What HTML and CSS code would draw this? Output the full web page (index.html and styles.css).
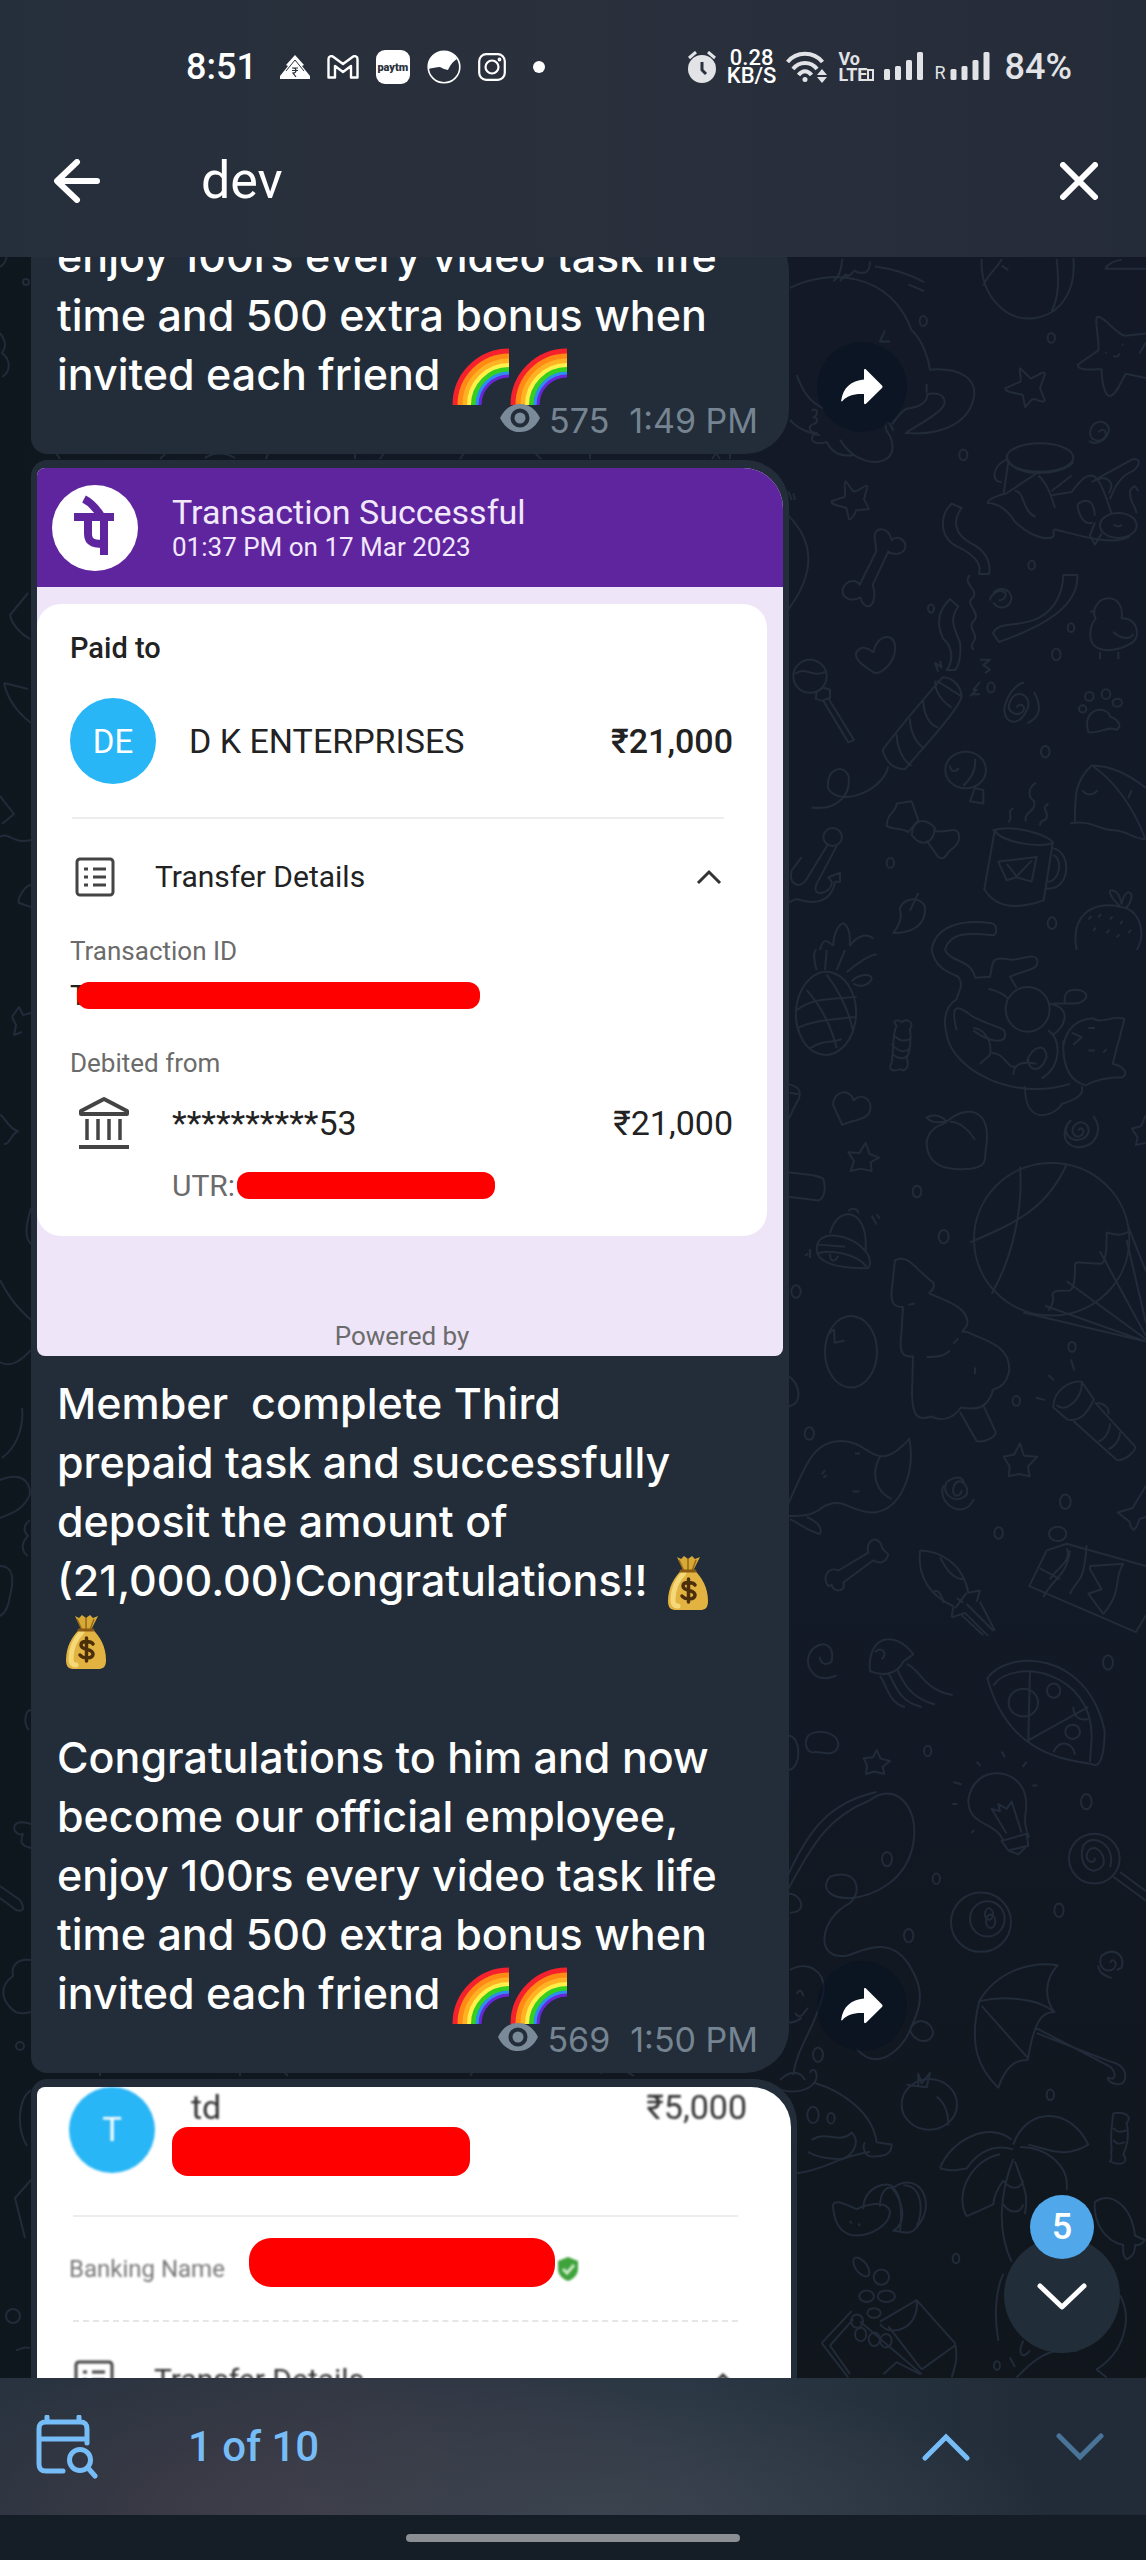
FILE: index.html
```html
<!DOCTYPE html>
<html lang="en">
<head>
<meta charset="utf-8">
<meta name="viewport" content="width=device-width, initial-scale=1">
<title>Chat search</title>
<link rel="stylesheet" href="styles.css">
</head>
<body>
<svg class="defs" aria-hidden="true">
  <symbol id="rainbow" viewBox="0 0 58 58">
    <g fill="none" stroke-width="6">
      <path d="M3.500 57A53.500 53.500 0 0 1 57 3.500" stroke="#f5222d"/>
      <path d="M8.500 57A48.500 48.500 0 0 1 57 8.500" stroke="#ff8a14"/>
      <path d="M13.500 57A43.500 43.500 0 0 1 57 13.500" stroke="#ffb324"/>
      <path d="M17.500 57A39.500 39.500 0 0 1 57 17.500" stroke="#fff04a" stroke-width="5"/>
      <path d="M21.500 57A35.500 35.500 0 0 1 57 21.500" stroke="#35cf1f" stroke-width="5"/>
      <path d="M25.500 57A31.500 31.500 0 0 1 57 25.500" stroke="#2b8ff2" stroke-width="4"/>
      <path d="M28 57A29 29 0 0 1 57 28" stroke="#6a26d9" stroke-width="3"/>
    </g>
  </symbol>
  <symbol id="moneybag" viewBox="0 0 58 58">
    <path d="M18 3l4 2 3-3 4 3 4-3 3 3 5-2-7 14h-9z" fill="#d9a935"/>
    <path d="M20 6l5 11M29 5v12M37 6l-4 11" stroke="#94691a" stroke-width="1.500" fill="none"/>
    <path d="M23 16h12c8 7 14 18 14 31 0 7-3 9-8 9H17c-5 0-8-2-8-9 0-13 6-24 14-31z" fill="#e3b341"/>
    <path d="M25 19c-7 7-11 16-11 27 0 4 2 6 5 6" stroke="#f5d878" stroke-width="5" fill="none" stroke-linecap="round"/>
    <path d="M22 17h14" stroke="#8a5a14" stroke-width="3" stroke-linecap="round"/>
    <path d="M36 31c-2-3-12-4-12 1 0 6 12 3 12 9 0 5-10 5-13 1M29.500 25v23" stroke="#4a2f0a" stroke-width="3.500" fill="none" stroke-linecap="round"/>
  </symbol>
  <symbol id="eye" viewBox="0 0 40 28">
    <path fill-rule="evenodd" d="M0 14C5 4 12 0 20 0s15 4 20 14c-5 10-12 14-20 14S5 24 0 14zM20 4.500a9.500 9.500 0 1 0 0 19 9.500 9.500 0 1 0 0-19z" fill="#7b8a98"/>
    <circle cx="20" cy="14" r="5.500" fill="#7b8a98"/>
  </symbol>
  <symbol id="share" viewBox="0 0 42 36">
    <path d="M23 1.500c0-1.400 1-1.800 2-.9l16 15.900c.8.900.8 1.700 0 2.500l-16 15.700c-1 .9-2 .5-2-.9V25C13 24.500 6 26.500 1.500 32c-.7.800-1.500.5-1.300-.6C2 19 10 11.500 23 10.500z" fill="#fff"/>
  </symbol>
  <symbol id="list" viewBox="0 0 40 40">
    <g fill="none" stroke="#444" stroke-width="3">
      <rect x="2" y="2" width="36" height="36" rx="3"/>
      <path d="M18 12h13M18 20h13M18 28h13M9 12h4M9 20h4M9 28h4"/>
    </g>
  </symbol>
</svg>

<header class="top">
  <div class="status">
    <div class="status-left">
      <span class="clock">8:51</span>
      <svg width="30" height="24" viewBox="0 0 30 24"><path d="M15 0l9 10-2 1 8 10v3H0v-3l8-10-2-1z" fill="#fff"/><path d="M6 16L15 5l9 11" fill="none" stroke="#29313c" stroke-width="1"/><path d="M12 13h6M12 15.500h6M13 13c4 0 4 5 0 5l3 4" fill="none" stroke="#29313c" stroke-width="1.200"/></svg>
      <svg width="32" height="24" viewBox="0 0 32 24"><path d="M1.500 4c0-3 3-3.500 5-2L16 9l9.500-7c2-1.500 5-1 5 2v18.500H24V11l-8 6-8-6v11.500H1.500z" fill="none" stroke="#fff" stroke-width="2.400" stroke-linejoin="round"/></svg>
      <span class="paytm">paytm</span>
      <svg width="34" height="34" viewBox="0 0 34 34"><circle cx="17" cy="17" r="15.800" fill="none" stroke="#fff" stroke-width="1.600"/><path d="M1 19C0 8 8 1 17 1c6 0 11 3 13 8-5 3-7 7-9 11l-4-1-4-2c-4 0-7 1-12 2z" fill="#fff"/></svg>
      <svg width="28" height="28" viewBox="0 0 28 28" fill="none" stroke="#fff" stroke-width="2.200"><rect x="1.200" y="1.200" width="25.600" height="25.600" rx="7"/><circle cx="14" cy="14" r="6.500"/><circle cx="21.500" cy="6.500" r=".8"/></svg>
      <span class="dot"></span>
    </div>
    <div class="status-right">
      <svg width="30" height="32" viewBox="0 0 30 32"><circle cx="15" cy="18" r="14" fill="#e1e3e6"/><path d="M15 11v8l4 4" fill="none" stroke="#29313c" stroke-width="3"/><path d="M2 7l7-6M28 7l-7-6" stroke="#e1e3e6" stroke-width="3"/></svg>
      <span class="rate"><span>0.28</span><span>KB/S</span></span>
      <svg width="42" height="32" viewBox="0 0 42 32" fill="none" stroke="#e1e3e6" stroke-width="4"><path d="M1.500 11c9-11 26-11 35 0M7 18c6-8 18-8 24 0M12.500 24c4-5 9-5 13 0"/><circle cx="19" cy="28.500" r="2.500" fill="#e1e3e6" stroke="none"/><path d="M31 24l5-6 5 6zM31 26h10l-5 6z" fill="#e1e3e6" stroke="none"/></svg>
      <span class="volte"><span>Vo</span><span>LTE<i></i></span></span>
      <svg width="40" height="30" viewBox="0 0 40 30" fill="#e1e3e6"><rect y="17" width="6" height="11" rx="1.500"/><rect x="11" y="14" width="6" height="14" rx="1.500"/><rect x="22" y="8" width="6" height="20" rx="1.500"/><rect x="33" width="6" height="28" rx="1.500"/></svg>
      <span class="roam"><span>R</span><svg width="41" height="30" viewBox="0 0 40 30" fill="#e1e3e6"><rect y="17" width="6" height="11" rx="1.500"/><rect x="11" y="14" width="6" height="14" rx="1.500"/><rect x="22" y="8" width="6" height="20" rx="1.500"/><rect x="33" width="6" height="28" rx="1.500"/></svg></span>
      <span class="battery">84%</span>
    </div>
  </div>
  <form class="search" role="search">
    <button type="button" class="icon-btn" aria-label="Back"><svg width="46" height="44" viewBox="0 0 46 44" fill="none" stroke="#fff" stroke-width="6" stroke-linecap="round" stroke-linejoin="round"><path d="M23 3L3 22l20 19M4 22h39"/></svg></button>
    <input class="query" type="text" value="dev" aria-label="Search messages">
    <button type="button" class="icon-btn" aria-label="Clear"><svg width="38" height="38" viewBox="0 0 38 38" stroke="#fff" stroke-width="6" stroke-linecap="round"><path d="M3 3l32 32M35 3L3 35"/></svg></button>
  </form>
</header>

<main class="chat">
  <svg class="wallpaper" viewBox="0 257 1146 2121" preserveAspectRatio="xMinYMin slice" aria-hidden="true">
    <!-- upper right -->
    <g transform="translate(780 250) scale(.3333 .4464)">
      <path d="M30 85C150 40 330 50 395 180c30 20 50 60 55 88 90-5 140 20 132 60-10 50-80 90-205 82 40-20 120-50 117-70-3-20-30-20-52-17 2 20-30 30-60 32-20 5-40 30-45 35M440 300v20M50 280c20 40 40 60 80 75M30 380c20 20 60 30 90 35M315 180l-15 25h30M180 425c40 50 110 60 145 40 20-15 15-40-5-60-10-20 5-30 20 0M95 360c20-10 20 10 5 15 10-2 20 10 0 15-20 5-10 20 10 20-30 10-10 30 30 20 20 30 50 32 80 30M160 70c20-10 25-30 27-50M180 70c10-10 20-20 20-12 20 0 20-20 30-8 10 0 40 10 40-25M285 37c50 5 100 15 147 35M385 77l47 15"/>
      <path d="M605 20c-5 80 70 140 155 133 80-7 130-60 120-135M815 137c25-35 20-80 15-117M610 80c20-35 45-40 55-60M665 35l20 10M975 42h123M975 42c10-10 30-18 50-20"/>
      <path d="M950 150c20-5 60 40 85 42l63-5M1078 232l20-25M950 150c-5 20 10 60 5 75l-62 32c0 15 50 10 72 10 0 30 10 60 25 60 20-2 30-30 48-50l60 10M975 230h5M1025 212h5M1000 237c10 5 15 0 20-5"/>
      <path d="M720 265l32 23c20-5 40-20 43-10l-15 32 15 27c-10 10-30-10-42 0l-17 15-8-27c-15-5-52-5-52-15l45-15c5-10-5-25-1-30zM197 518l23 23c20 0 40-20 42-10l-10 27 15 22-38 3c-5 10-15 22-22 20l-8-25c-15-5-45-5-45-15l40-10c5-10-5-30 3-35z"/>
      <path d="M955 408c20-15 30 5 15 15-20 10-40 0-40-15 5-30 55-30 57-5-5 25-40 35-60 25"/>
      <ellipse cx="780" cy="465" rx="100" ry="32"/><path d="M680 460c5 50 160 50 200 15M686 470l-15 75M680 470c-40 10-50 50-15 50M780 495L680 545c-30 5-60 15-57 22 30 0 60 15 80 40 40 30 90 45 115 36 10-8-5-15 7-17 60 10 170 40 225 15M705 540c30 0 20 45 62 58M775 505c30 20 40 50 50 73M810 550l65-8c60-60 80-50 120 50M815 540l60-35M945 515l115-47c30 0 15 22-10 30-30 10-50 40-60 60M935 520c50-20 70 0 52 25"/>
      <ellipse cx="1015" cy="617" rx="55" ry="28"/><path d="M945 595c-5-50-45-30-52-25 0 20 20 50 45 40M1070 590c-10-30-20-20-20-50 15-20 20-5 25 0M945 610l-15 30 15 20 20-25M1000 615c10 5 20 5 25 0"/>
      <path d="M285 650c-10-30 40-35 50 0 20-15 55 5 35 25-15 10-40 5-45 0l-47 75c10 20 5 50-17 48-20-5-15-15-20-20-20 10-60 5-52-20 10-20 40-20 50-8l50-75zM515 568l30 10c-30 30-20 60 30 80 40 15 60 40 52 68h-30c10-25-20-45-60-60-60-20-60-70-22-98zM570 728c-25 20 25 30 10 50-30 15 20 30 5 50-30 20 15 30-5 50-10 10 0 15 0 18M510 782l25 17c-30 30-10 50 5 80 5 30-5 55-15 62h-25c20-20 20-50-10-70-20-30-20-60 20-89zM850 728h42c5 70-100 115-235 150l-18-20c20-30 80-10 140-35 50-20 70-60 71-95z"/>
      <path d="M655 785c20 0 30-15 15-20-20-5-40 10-40 20M640 790c20 20 50 10 55-10-5-25-40-25-55-12M985 780c30 0 45 20 40 45 30 0 50 15 45 40-10 30-130 50-138 5-5-25 10-40 15-45-15-20 10-45 38-45zM940 810h-10M960 900v17M1015 900v17M1000 855c20 15 50 20 60 5"/>
      <path d="M285 948c-20-10-60-25-57-45 15-20 40-10 52-2 10-40 60-45 65-15 5 30-30 60-60 62z"/><ellipse cx="90" cy="955" rx="50" ry="37"/><path d="M45 950c30-20 50 10 90-5M110 990l20-10 20 5v18l-25 7-18-5zM130 1010l75 93 17-5-78-95"/>
      <path d="M470 965l75 35c-10 30-110 110-170 163-30 0-55-10-67-43 40-40 130-120 180-163 30 0 55 20 57 43M465 965c0 30 30 50 50 60M430 1010c0 30 20 55 45 60M390 1050c0 30 20 55 40 65M350 1085c0 30 20 60 45 70M325 1157c-20 60-150 90-180 50-10-40 40-60 60-30 10 40-30 80-110 72M480 920l5 15-20-10 10 20M600 918h30l-20 12 20 10-15 8M570 1000l20-15h-10l20-17M580 995h20"/>
      <path d="M710 1025c10-15 35 0 15 12-20 8-45-5-37-20 15-40 70-20 55 10-20 40-70 40-70 0 10-40 50-60 60-57M762 990c30 40 10 60-20 70M925 1080c-15-40 20-50 35-50 20 0 30 10 30 15 20 5 40 20 20 30-30-10-50 10-85 5z"/>
      <ellipse cx="928" cy="1000" rx="13" ry="10"/><ellipse cx="978" cy="995" rx="13" ry="11"/><ellipse cx="1012" cy="1014" rx="14" ry="9"/><ellipse cx="908" cy="1028" rx="11" ry="8"/>
      <ellipse cx="557" cy="1165" rx="61" ry="41"/><path d="M585 1140c5 30-20 50-35 60M570 1235l15-30 25 5v30zM510 1155c0 15 20 15 25 5M320 1290c0-30 30-30 30-50l45-5 20 42-30 27c-20-10-50-5-65-14zM395 1310c5-35 40-40 70-15-5 35-40 45-70 15zM460 1300c30 10 60-10 75 5 10 20-10 30-15 35-20 5-20 30-45 20l-35-37"/>
      <path d="M645 1297l-32 135c40 50 120 40 178 25l28-132M640 1300c60-15 160 10 180 27-30 15-160 0-175-27zM820 1340c60 10 50 100-25 90M820 1355c30 10 20 60-18 60M655 1370l115-10-15 55-45-10-30 7zM680 1375l30 28 45-35M685 1283c20-20-10-20 15-33M738 1280c-10-20 30-20 25-45-20-10-20-30 5-42M780 1290c0-20 25-5 20-28-10-15-5-15 5-22"/>
      <ellipse cx="158" cy="1315" rx="28" ry="20"/><path d="M145 1330l-70 85c-20 15-50 5-40-25l30-30M170 1335l-60 85c-20 35 50 20 45-5l-10-10 35-10v20h-15c-10 50-70 50-110 40-20-5-25 20-45-10M340 1530c30 0 100-5 95-60-25-30-80-10-75 10 10 20-10 40-20 50zM390 1480l25-40M885 1280c0-60 0-90 50-125 60 0 110 20 163 50M870 1285c60-10 90 15 130 15 40 0 60 20 98 20M940 1157c60 30 120 90 155 160M908 1210c10 15 35 10 45 0M1055 1210l-10 18M890 1568c-20-80 50-110 130-97 60 5 80 60 50 97M1020 1470c-30-20-40-40-20-35 20 5 20 20 25 30 5-20 20-35 30-20 0 15-10 25-20 30M120 1568c10-30 20-20 40-10 0-30 20-50 30-50 20 10 20 30 20 50 20-20 50-30 70-15M455 1568c10-50 80-70 180-60 20 5 15 25 5 27-60-5-130-10-145 33"/>
      <g><circle cx="430" cy="159" r="11"/><circle cx="814" cy="197" r="11"/><circle cx="550" cy="459" r="12"/><circle cx="755" cy="706" r="10"/><circle cx="453" cy="803" r="9"/><circle cx="873" cy="846" r="10"/><circle cx="829" cy="906" r="13"/><circle cx="633" cy="980" r="11"/><circle cx="796" cy="1124" r="13"/><circle cx="331" cy="1373" r="11"/><circle cx="816" cy="1508" r="13"/></g>
      <path d="M25 595c80 60 80 130 0 210M25 540l10 20M40 545l5 15M925 1500l10-8M955 1495l8-7M990 1500l8-7M1020 1510l8-7M940 1525l8-7M980 1530l8-7M1010 1540l8-7M1045 1530l8-7"/>
    </g>
    <!-- middle right -->
    <g transform="translate(780 950) scale(.3333 .4464)">
      <ellipse cx="138" cy="142" rx="90" ry="93" transform="rotate(15 138 142)"/><path d="M80 90c60 50 80 100 90 130M140 55c50 50 70 90 80 130M50 135c50-30 120-25 180-30M50 175c60-20 120-20 175-25M90 220c40-20 60-10 95-20M110 45c-10-25-10-45 0-45M135 45l5-45M170 45l25-45M200 50c30-20 70-40 90-40M215 70c20-15 60-20 60-5-10 15-35 20-55 10"/>
      <path d="M350 170c-20-15 10-15 15-8 15-10 40 0 25 15 5 20 0 50-10 65 10 20-5 32-20 25-15 5-40 5-25-15 10-50 0-60 15-82zM340 190c20 15 30 15 50 10M335 210c20 20 40 20 55 10M340 235c20 10 30 10 45 0M187 392l-28-45c0-30 50-40 62-10 25-20 60 0 48 25-10 20-60 20-82 30z"/>
      <path d="M257 432l12 25 28 8-25 10 3 20-33-5-30 5 10-22-17-20 33 2zM25 498c50 5 90 5 105 15 10 25 0 45-15 48l-90-8M25 300c20 5 40 10 33 30l-33 50M30 320l25 3"/>
      <path d="M455 0c10 40 50 50 80 60 20 20-5 40-5 50-40 20-40 50-30 80 20 80 200 150 370 110M495 0c20 30 80 20 90 62l45-2c10-30 0-45 50-40 30 10 90-20 92 5 5 20-40 20-82 35l20 25M625 87c30 5 50 15 60 22M530 180c-20-60 0-60 50-30 80 30 100 20 95 45-15 20-70 0-95-15M600 255l30-20c10-40-30-60-50-60M635 230c40 0 50 40 70 30M700 280c0-30 40-30 70-25M740 250c20-40 60-40 60-10-20 40-60 30-55 0M735 305c0 100 100 60 110 40 40-10 70-20 60-40M807 120c80 10 40 60 10 70M820 120h60c30 0 60-20 20-30-40-5-50 10-45 30"/>
      <ellipse cx="743" cy="133" rx="66" ry="50"/><path d="M850 215c10-40 40-60 90-62 20 15 70-10 93 2l-15 45c-10 20-10 30-20 55 30 5 50 20 30 30-40 0-80 5-110 18-60-10-70-60-68-100M875 185l30 10-25 18M925 175h20M925 225h20M970 230l10-8M805 180c40 20 40 80-20 108"/>
      <path d="M500 385c60-40 130-30 120 50-10 30 10 50-50 55-80 5-130-10-130-60 10-40 60-40 60-45zM500 385c-20-20-50-15-60-10 15 15 40 10 60 10zM510 385c30 0 60 20 75 40M895 405c10-15 25 5 5 12-20 5-30-15-15-25 30-20 60 15 25 30-40 15-70-20-40-37M940 372c30 30 10 70-50 70-60-10-30-60-15-60M1098 370l-15 25-27 5 17 20-5 17 30-5"/>
      <ellipse cx="815" cy="648" rx="233" ry="171"/><path d="M720 485c10 90-20 200-85 285M860 480c-60 100-150 130-290 175M1045 620l53 100M1040 650l58 185M960 675l138 190M860 742l238 130M795 797l303 80M730 812l368 65M1050 630c-10 0-20 15-70 3 0 30 0 60-15 70-60 0-80-10-80 5 0 20 0 50-15 55-40 0-60 0-50 15 0 10-5 20-15 30"/>
      <path d="M150 635c20-60 100-60 107 15v25M110 670c0-50 110-30 140 0 30 20 20 45 10 43-60 0-150-5-150-43zM110 680c40-10 120 0 150 30M115 660l80 5M150 680c0 20 15 20 25 5M205 585c10-10 30-5 30 5M275 595l15 20M290 592l10 10M75 685l10-5M90 690v-20"/>
      <ellipse cx="213" cy="900" rx="78" ry="80"/><path d="M145 860l17-10 2 30 30-5M345 695c40-15 60 20 115 50 10 20-20 20-10 25 60 20 110 30 113 65-5 20-30 20-5 20 60 20 130 30 130 85-10 50-60 40-50 50-20 40-50 40-95 35-30 30-60 30-90 20-40 10-55 0-57-50l3-85c-40 5-40-20-35-50l5-60c-30 0-40-10-32-50zM385 795l20-3M440 912c20 0 50 0 70-15M520 882l15-12M540 1035l50 65c20 5 60-10 57-20l-37-60M585 935v15"/>
      <path d="M25 1240c50-80 70-140 160-140 90 0 100 80 203-5 20 80-30 160-105 165-80 0-90-40-160-10M25 1268c40 0 70 0 100-18M300 1135c-30 40-10 80 35 95M30 1275c30 10 60 30 90 33 10-20-20-30-40-38M125 1175l10-10M130 1182l10-5M225 1128h15M218 1213h20M25 955c30 10 50 60 0 68"/>
      <path d="M820 1025c0-40 50-60 85-58l37 40c-20 30-40 50-80 45zM830 1020c30 20 80-20 75-50M880 1055l130 87c20 5 60-20 55-30l-120-98M950 1015c20 0 40 10 35 25M990 1060c0 20-20 40-35 40M1020 1080c0 20-20 35-35 38M873 917l10 25M805 952l17 12M768 1003l27 5"/>
      <path d="M720 1105l12 28 40 2-28 22 5 22-32-5-30 5 2-22-18-22 32-5zM545 1210c0 15-30 20-25-5 10-30 50-10 40 15-30 25-80 0-60-28 40-20 50-5 52 0M490 1200c-20 40 60 80 92 30M145 1425c-20-20 0-45 30-35l90-40c-10-30 30-40 40-15 0 10 20 15 20 20-10 20-30 20-45 12l-90 50c10 20-30 25-35 5z"/>
      <path d="M420 1345c60 0 130 30 145 95l35-5-10 25M515 1495l5-25c-60-20-110-60-100-125M480 1360c20 30 40 50 75 50M515 1495l40-10 70 52M560 1465l80 60M545 1490l65 45M600 1460l45 65M460 1438c20-10 30 20 30 25M560 1440l-35 35M530 1452l20 10"/>
      <path d="M800 1345l-52 80 320 103 30-38M800 1345l60-15 238 50M870 1345c-10 60-50 60-80 105M920 1333c-10 100-30 70-50 110M840 1410c-20-10-50-20-60-25M860 1340c20 30-40 50-50 70M930 1380l100-5c-30 30 0 60-60 112l-45-45 40-10-35-45zM1098 1200l-40 50-45 10 35 20c10 30 20 20 30-5l20-5"/><ellipse cx="833" cy="1308" rx="26" ry="16"/>
      <circle cx="411" cy="541" r="13"/><circle cx="491" cy="642" r="15"/><circle cx="48" cy="765" r="14"/><circle cx="876" cy="889" r="11"/><circle cx="709" cy="1010" r="11"/><circle cx="88" cy="1083" r="14"/><circle cx="856" cy="1236" r="16"/><circle cx="656" cy="1306" r="13"/>
    </g>
    <!-- lower right -->
    <g transform="translate(780 1640) scale(.3333 .4783)">
      <path d="M120 35c0 15 20 20 35 10 10-40-30-40-50-30-40 20-20 65 30 65 20 0 25-5 35-5M270 65c-10-70 70-90 130-35l-30 15c-20 30-70 30-100 20zM300 75c20 20 30 60 75 65M325 70c20 20 30 60 100 70M350 60c20 30 40 60 115 75M380 50c40 10 50 55 138 65M285 25c20-15 40 5 20 15"/>
      <path d="M622 80c60-60 300-60 352 110 0 40-10 80-35 70-60-10-250-10-317-180zM640 95c60-60 300-30 295 110l-5 50M750 65l-5 145 180-70M880 140c0 20 20 30 45 25M820 235c20-30 60-20 65 5"/><ellipse cx="730" cy="131" rx="44" ry="29"/><ellipse cx="821" cy="106" rx="20" ry="15"/><ellipse cx="878" cy="192" rx="22" ry="15"/>
      <path d="M85 200c20-15 90-10 90 20-10 30-60 10-75 15-20 0-30-20-15-35zM290 230l12 18 28 5-22 12 5 15-30-5-25 5 3-18-10-15 28-2zM25 200c40 0 40 70 0 72"/>
      <path d="M670 420c-20-40-105-30-105-85 15-80 165-70 173 0 5 30-15 40 10 78M665 420l75-15 5 25-60 10zM685 440l30 8 30-20M680 405l-45-52 25 5-5-15 25 10 15-15 30 65M520 297l25 5M517 343h15M590 255l12 8M665 233l10 12M740 255l-12 10M757 304h15M573 403l10-5"/>
      <path d="M25 490c60-90 120-150 265-172M25 520c80-100 120-150 245-185 70-40 150 10 130 90-20 80-120 110-190 115-60 0-90-20-60-45 80-20 100 30 60 55-90 30-110 120-10 110 50-10 140-50 200 35 40 50 10 90-10 120 20-30 60-20 70 5-10 30-60 20-70-5-20 40-100 90-160 40M25 530c40 0 60 40 5 40"/>
      <ellipse cx="603" cy="590" rx="90" ry="62"/><ellipse cx="622" cy="583" rx="52" ry="37"/><circle cx="627" cy="573" r="12"/><circle cx="632" cy="588" r="14"/>
      <ellipse cx="943" cy="457" rx="76" ry="52"/><path d="M945 455c0 15-25 10-25-5 10-30 60-10 50 20-30 30-80 0-60-40 30-30 100 0 80 45M1020 485l78 40M1000 495l98 50M990 675c10-15 30 5 5 15-30 5-40-15-30-30 40-20 70 0 60 25l-15 5M955 680c0 15 15 20 40 27"/>
      <path d="M598 755c50-60 150-85 235-75-40 30-40 70-10 98-40 0-60 20-80 100-20 0-60 0-88 58-60-40-90-90-57-181zM598 755c60-10 170-10 225 23M605 765l140 110M765 810l220 80c20 5 30 35 0 25-10 10 60 30 50-10-10-20-30-20-50-25L770 822"/>
      <path d="M30 690c50-20 110 0 100 50-30 80-80 110-90 170M50 740c10-15 20 0 20 5M45 780c20 20 30-10 40-10M25 800c20 0 30-5 40-10M0 920c30-20 60-20 75 0M0 940c50 10 100 0 110-25 0-20-15-20-20-10M100 925c100 20 180 70 190 125l45 5c0 20-20 25-60 25-20 0-30-20-20-30M95 1045c50-20 80 10 120-15 30 20 0 50-30 55-40 0-80-5-100-15M50 1115c100-10 100-30 220-45"/>
      <ellipse cx="448" cy="971" rx="83" ry="53"/><path d="M380 930l60 5 10-30-25 22-10-20v25M470 955c20 10 35 30 35 60M480 1105c30-60 150-100 215-60M480 1105c30 5 40 5 80 0 40-40 90-50 140-40M560 1205c-40-50 20-120 100-130M560 1205l80-25c0-20 20-40 30-50M700 1055c40-80 170-80 225 0-70 30-120 10-180 0M700 1085c-40 70-50 150-5 215M705 1090c30 60 40 70 30 110M720 1060c80 0 150 40 140 90M670 1130c20 20 50 20 60 0M670 1180c20 20 50 20 60 0"/>
      <path d="M1000 990c30-5 60 5 40 20 10 30 0 50-10 65 20 20-10 25-40 15 10-10 0-10 5-25-5-30 0-50 5-75zM1000 1020c10 10 20 10 40 5M1000 1045c10 10 20 10 35 5M160 1190c-10-30 50-5 70 0 30-10 90-20 100 5 0 30-60 50-100 50-40 0-65-20-70-55zM250 1190c0-50 80-60 90-45 80-40 140 40 60 90-20 10-40 0-60 0 50-20 20-70-5-90M300 1185c0-60 80-60 60 50M370 1140c60 0 60 60 40 85M210 1215l5 5M235 1220l5 5M945 1175c50-25 110 10 120 70l30 10c-10 10-20 10-30 10 0 20-10 25-25 30-15-10-10-20-10-30-60-10-90-50-85-90z"/>
      <ellipse cx="244" cy="1311" rx="28" ry="14" transform="rotate(35 244 1311)"/><ellipse cx="304" cy="1332" rx="23" ry="16"/><ellipse cx="260" cy="1372" rx="22" ry="12"/><ellipse cx="319" cy="1372" rx="26" ry="12"/><ellipse cx="282" cy="1407" rx="20" ry="10"/><ellipse cx="231" cy="1424" rx="18" ry="14"/><ellipse cx="242" cy="1452" rx="17" ry="14"/><ellipse cx="283" cy="1462" rx="17" ry="14"/><ellipse cx="318" cy="1465" rx="17" ry="14"/>
      <path d="M125 1470l90-67M125 1470l80 72M150 1475l70-55M150 1475l60 60M300 1425l110-45 115 90c10 30 0 50-10 72M300 1430c30 30 120 10 110-50M325 1435l100 90M240 1425l185 110M525 1475l-100 50M310 1535l40-25 70 25M670 1325c-20 30-30 80-15 140M1020 1370c40 50 10 120-70 155l30 17M710 1542c40-30 100-70 180-55M690 1500l15 20M730 1465c-20 30 0 40 20 20"/>
      <circle cx="984" cy="47" r="15"/><circle cx="443" cy="232" r="11"/><circle cx="919" cy="338" r="16"/><circle cx="321" cy="458" r="15"/><circle cx="469" cy="499" r="11"/><circle cx="837" cy="565" r="14"/><circle cx="386" cy="618" r="14"/><circle cx="811" cy="951" r="11"/><circle cx="114" cy="867" r="15"/><circle cx="99" cy="993" r="17"/><circle cx="153" cy="1000" r="11"/><circle cx="528" cy="1293" r="10"/><circle cx="651" cy="1517" r="9"/>
    </g>
    <!-- left margin -->
    <path d="M0 267c6-4 8-10 6-18M0 333c8 10 5 16 2 20 8 6 10 18 0 24M28 593l-18 22c2 10 12 20 20 24M4 683l24 6M4 683c4 18 14 30 27 40M0 796l14 18-12 10M0 837c8-6 14 8 31 3M31 885c-6 0-14 14-12 18l12 4M12 1017l7-10 4 8 8-2M12 1017l4 8-2 10 8-3M0 1115c4 0 8 14 18 16-8 4-8 14-14 13M31 1208c-6 20-6 30 0 36M0 1280c10 20 20 30 31 40M0 1362c10 6 20 0 31-12M22 1408c2 20-6 40-20 50M0 1480c20-8 30 0 30 14-6 16-20 20-30 24M30 1520c-8 6-6 12-2 16-8 8-6 16 0 20M0 1566c14 0 14 14 10 30-2 14-6 18-10 20M31 1710c-6 0-8 14-2 20M31 1824c-24-8-18 14-8 10-4 10 0 12 8 14M0 1886l20 14c6 10 2 12-4 10l-16-12M31 1960c-14-2-20 6-18 16-14 10-12 24 0 34 4 4 10 4 18 2M31 2090c-14 10-14 40-4 56M31 2180l-16 18 10 40M16 2350c6 0 6-4 14-2"/>
    <circle cx="26" cy="282" r="3"/><circle cx="20" cy="2046" r="4"/><circle cx="13" cy="2316" r="7"/>
    <!-- strips between the bubbles -->
    <path d="M56 453l4 6M160 459l6-6M205 458c8-6 20-6 30 0M268 453l-2 6M355 459v-6M384 453l-4 6M460 459l4-6M535 453l6 6M590 453v6M712 459l4-6 4 6M730 453v6M100 2070v6M240 2076v-6M282 2070l6 6M470 2076l4-6M600 2073c16-8 30 0 34 3"/>
  </svg>

  <article class="message">
    <div class="bubble cut-top">
      <p class="text">enjoy 100rs every video task life<br>time and 500 extra bonus when<br>invited each friend <svg class="emoji" role="img" aria-label="rainbow"><use href="#rainbow"/></svg><svg class="emoji" role="img" aria-label="rainbow"><use href="#rainbow"/></svg></p>
      <div class="meta"><svg class="eye" role="img" aria-label="Views"><use href="#eye"/></svg><span>575</span><time>1:49 PM</time></div>
    </div>
    <button class="share" type="button" aria-label="Share"><svg width="42" height="36"><use href="#share"/></svg></button>
  </article>

  <article class="message">
    <div class="bubble with-media">
      <section class="receipt">
        <header class="receipt-head">
          <svg class="pe" viewBox="0 0 86 86" role="img" aria-label="PhonePe"><circle cx="43" cy="43" r="43" fill="#fff"/><g fill="none" stroke="#5f259f" stroke-width="8"><path d="M22 32h40M32 14c6 3 12 9 17 17M36 32v17c0 9 8 11 16 9M52 32v38"/></g></svg>
          <div><h2>Transaction Successful</h2><p>01:37 PM on 17 Mar 2023</p></div>
        </header>
        <div class="receipt-body">
          <div class="card">
            <h3>Paid to</h3>
            <div class="party"><span class="avatar">DE</span><span class="name">D K ENTERPRISES</span><strong>₹21,000</strong></div>
            <hr>
            <button class="details" type="button"><svg width="40" height="40"><use href="#list"/></svg><span>Transfer Details</span><svg width="26" height="16" viewBox="0 0 26 16" fill="none" stroke="#333" stroke-width="3"><path d="M2 14L13 3l11 11"/></svg></button>
            <h4>Transaction ID</h4>
            <div class="txn"><span>T</span><i class="redact long"></i></div>
            <h4 class="debit-label">Debited from</h4>
            <div class="bank">
              <svg width="52" height="54" viewBox="0 0 52 54" fill="none" stroke="#444" stroke-width="4" stroke-linejoin="round"><path d="M26 3L3 15v3h46v-3zM1 51h50"/><path d="M9 23v21M20 23v21M31 23v21M42 23v21" stroke-width="3.500"/></svg>
              <span class="acct">**********53</span><span>₹21,000</span>
            </div>
            <div class="utr"><span>UTR:</span><i class="redact"></i></div>
          </div>
          <p class="powered">Powered by</p>
        </div>
      </section>
      <p class="text">Member&nbsp; complete Third<br>prepaid task and successfully<br>deposit the amount of<br>(21,000.00)Congratulations!! <svg class="emoji" role="img" aria-label="money bag"><use href="#moneybag"/></svg><br><svg class="emoji" role="img" aria-label="money bag"><use href="#moneybag"/></svg><br><br>Congratulations to him and now<br>become our official employee,<br>enjoy 100rs every video task life<br>time and 500 extra bonus when<br>invited each friend <svg class="emoji" role="img" aria-label="rainbow"><use href="#rainbow"/></svg><svg class="emoji" role="img" aria-label="rainbow"><use href="#rainbow"/></svg></p>
      <div class="meta"><svg class="eye" role="img" aria-label="Views"><use href="#eye"/></svg><span>569</span><time>1:50 PM</time></div>
    </div>
    <button class="share" type="button" aria-label="Share"><svg width="42" height="36"><use href="#share"/></svg></button>
  </article>

  <article class="message">
    <div class="bubble with-media wide">
      <section class="preview">
        <div class="payee"><span class="avatar soft">T</span><div class="payee-name"><span class="soft">td</span><i class="redact"></i></div><span class="soft amount">₹5,000</span></div>
        <hr>
        <div class="bank-name"><span class="soft">Banking Name</span><i class="redact"></i><svg class="soft" width="22" height="26" viewBox="0 0 22 26"><path d="M11 1l10 4v8c0 6-5 10-10 12C6 23 1 19 1 13V5z" fill="#3fa33c"/><path d="M6 13l4 4 7-8" fill="none" stroke="#cfeccb" stroke-width="3"/></svg></div>
        <hr class="dashed">
        <div class="details soft"><svg width="40" height="40"><use href="#list"/></svg><span>Transfer Details</span><svg width="26" height="16" viewBox="0 0 26 16" fill="none" stroke="#333" stroke-width="3"><path d="M2 14L13 3l11 11"/></svg></div>
      </section>
    </div>
  </article>

  <button class="to-bottom" type="button" aria-label="5 unread messages, scroll down">
    <span class="badge">5</span>
    <svg width="50" height="28" viewBox="0 0 50 28" fill="none" stroke="#fff" stroke-width="5" stroke-linecap="round" stroke-linejoin="round"><path d="M3 3l22 21L47 3"/></svg>
  </button>
</main>

<footer class="results">
  <button type="button" class="icon-btn" aria-label="Jump to date"><svg width="62" height="64" viewBox="0 0 62 64" fill="none" stroke="#76bdf8" stroke-width="5" stroke-linecap="round" stroke-linejoin="round"><path d="M27 56H10c-5 0-7-2-7-7V14c0-5 2-7 7-7h34c5 0 7 2 7 7v14M3 24h48M11 7V2M43 7V2"/><circle cx="44" cy="45" r="10.500"/><path d="M52 53l7 8"/></svg></button>
  <span class="count">1 of 10</span>
  <button type="button" class="icon-btn" aria-label="Previous result"><svg width="48" height="28" viewBox="0 0 48 28" fill="none" stroke="#76bdf8" stroke-width="5" stroke-linecap="round"><path d="M3 25L24 4l21 21"/></svg></button>
  <button type="button" class="icon-btn" aria-label="Next result" disabled><svg width="48" height="28" viewBox="0 0 48 28" fill="none" stroke="#497497" stroke-width="5" stroke-linecap="round"><path d="M3 3l21 21L45 3"/></svg></button>
</footer>
<div class="gesture"><span></span></div>
</body>
</html>
```
FILE: styles.css
```css
* { box-sizing: border-box; }
h2, h3, h4, p { margin: 0; font-weight: 400; }
button { padding: 0; border: 0; background: none; font: inherit; color: inherit; }
svg { display: block; flex: none; }
.defs { position: absolute; width: 0; height: 0; }

body {
  margin: 0;
  height: 100vh;
  display: flex;
  flex-direction: column;
  background: #111923;
  color: #fff;
  font-family: Roboto, "Liberation Sans", sans-serif;
}

/* top bars */
.top {
  flex: none;
  padding-top: 40px;
  background: linear-gradient(90deg, #252f3b, #2a303c 50%, #252c39);
}
.status {
  display: flex;
  justify-content: space-between;
  height: 54px;
  padding: 0 74px 0 186px;
}
.status-left, .status-right { display: flex; align-items: center; }
.status-left { gap: 17px; }
.status-right { gap: 10px; color: #e1e3e6; }
.clock { font-size: 36px; font-weight: 500; margin-right: 6px; }
.paytm {
  display: grid;
  place-items: center;
  width: 34px;
  height: 34px;
  border-radius: 9px;
  background: #fff;
  color: #29313c;
  font-size: 11px;
  font-weight: 900;
}
.dot { width: 12px; height: 12px; margin-left: 10px; border-radius: 50%; background: #fff; }
.rate, .volte { display: grid; font-weight: 700; }
.rate { color: #fff; font-size: 22px; line-height: 18px; font-weight: 500; text-align: center; }
.volte { font-size: 18px; line-height: 16px; }
.volte i { display: inline-block; width: 7px; height: 12px; border: 2px solid #e1e3e6; }
.roam { display: flex; align-items: flex-end; gap: 4px; }
.roam span { font-size: 18px; line-height: 18px; }
.battery { font-size: 36px; font-weight: 500; margin-left: 4px; }

.search {
  display: flex;
  align-items: center;
  height: 163px;
  padding: 10px 48px 0 54px;
}
.icon-btn { flex: none; }
.query {
  flex: 1;
  min-width: 0;
  margin-left: 101px;
  padding: 0;
  border: 0;
  outline: 0;
  background: none;
  color: #fff;
  font: 400 52px/60px Roboto, sans-serif;
}

/* conversation */
.chat {
  position: relative;
  flex: 1;
  min-height: 0;
  overflow: hidden;
  display: flex;
  flex-direction: column;
  gap: 6px;
  padding: 0 31px;
  background: linear-gradient(90deg, #0f171e, transparent 50%), linear-gradient(#131927, #121a27 60%, #10161c);
}
.wallpaper {
  position: absolute;
  inset: 0;
  width: 100%;
  height: 100%;
  fill: none;
  stroke: #222b39;
  stroke-width: 2;
  stroke-linejoin: round;
}
.wallpaper * { vector-effect: non-scaling-stroke; }
.message { position: relative; display: flex; align-items: flex-end; gap: 28px; flex: none; }
.bubble {
  flex: 0 1 758px;
  min-width: 0;
  background: #222d39;
  border-radius: 16px 44px 44px 16px;
}
.bubble.cut-top { margin-top: -30px; }
.bubble.with-media { padding: 8px 6px 0; }
.bubble.wide { flex-basis: 766px; }
.text {
  padding: 0 26px;
  font: 500 43px/59px Inter, "Noto Sans", sans-serif;
  white-space: nowrap;
}
.with-media .text { padding: 18px 20px 0; }
.emoji { display: inline-block; width: 58px; height: 58px; margin: -4px 0; vertical-align: -12px; }
.meta {
  display: flex;
  justify-content: flex-end;
  align-items: center;
  padding: 0 31px 16px;
  color: #768492;
  font: 400 34px/32px Inter, sans-serif;
}
.with-media .meta { padding-right: 25px; }
.meta time { margin-left: 20px; }
.eye { width: 40px; height: 28px; margin: 0 9px 6px 0; }
.share {
  display: grid;
  place-items: center;
  width: 90px;
  height: 90px;
  margin-bottom: 22px;
  border-radius: 50%;
  background: rgba(8, 19, 33, .6);
}

/* payment receipt */
.receipt {
  overflow: hidden;
  border-radius: 8px 40px 8px 8px;
  background: #eee5f8;
  color: #222;
}
.receipt-head {
  display: flex;
  align-items: center;
  gap: 34px;
  height: 119px;
  padding-left: 15px;
  background: #5f259f;
  color: #f2e8fb;
}
.pe { width: 86px; height: 86px; }
.receipt-head h2 { font-size: 34px; line-height: 38px; }
.receipt-head p { font-size: 26px; line-height: 32px; }
.receipt-body { padding: 17px 16px 0 0; }
.card { padding: 26px 34px 34px 33px; border-radius: 24px; background: #fff; }
.card h3 { font-size: 29px; line-height: 36px; font-weight: 500; }
.party { display: flex; align-items: center; margin-top: 32px; font-size: 34px; }
.avatar {
  display: grid;
  place-items: center;
  flex: none;
  width: 86px;
  height: 86px;
  border-radius: 50%;
  background: #29b6f6;
  color: #fff;
  font-size: 33px;
}
.name { flex: 1; margin-left: 33px; }
.party strong { font-weight: 500; }
hr { height: 2px; margin: 33px 9px 38px 2px; border: 0; background: #ededed; }
.details {
  display: flex;
  align-items: center;
  width: 100%;
  padding: 0 11px 0 5px;
  font-size: 30px;
  line-height: 40px;
  text-align: left;
}
.details span { flex: 1; margin-left: 40px; }
.card h4, .powered { font-size: 26px; line-height: 34px; color: #6b6b6b; }
.card h4 { margin-top: 37px; }
.redact { flex: none; width: 258px; height: 27px; border-radius: 12px; background: #f00; }
.redact.long { width: 403px; margin-left: -10px; }
.txn { display: flex; align-items: center; height: 30px; margin-top: 12px; font-size: 28px; }
.card .debit-label { margin-top: 36px; }
.bank { display: flex; align-items: center; margin: 16px 0 0 8px; font-size: 34px; }
.acct { flex: 1; margin-left: 42px; }
.utr { display: flex; align-items: center; height: 34px; margin: 18px 0 0 102px; font-size: 30px; color: #6b6b6b; }
.utr .redact { margin-left: 2px; }
.powered { margin-top: 83px; padding-bottom: 3px; text-align: center; }

/* second picture, a soft low-resolution thumbnail */
.preview {
  overflow: hidden;
  padding: 0 44px 20px 32px;
  border-radius: 8px 40px 0 0;
  background: #fff;
  color: #333;
}
.soft { filter: blur(1px); }
.payee { display: flex; align-items: flex-start; gap: 17px; height: 90px; font-size: 34px; line-height: 40px; }
.payee-name { flex: 1; display: grid; }
.payee-name .soft { margin-left: 19px; }
.preview .redact { width: 298px; height: 49px; border-radius: 16px; }
.preview hr { margin: 38px 9px 20px 4px; }
.bank-name { display: flex; align-items: center; height: 50px; font-size: 24px; color: #777; }
.bank-name .redact { width: 306px; margin: 0 2px 0 auto; border-radius: 22px; }
.bank-name svg { margin-right: 168px; }
.bank-name .soft { margin-top: 14px; }
.preview hr.dashed { margin: 33px 9px 38px 4px; background: none; border-top: 2px dashed #e6e6e6; }

.to-bottom {
  position: absolute;
  right: 26px;
  bottom: 25px;
  display: grid;
  place-items: center;
  width: 116px;
  height: 116px;
  padding-top: 4px;
  border-radius: 50%;
  background: #222d3a;
}
.badge {
  position: absolute;
  top: -42px;
  left: 26px;
  width: 64px;
  height: 64px;
  border-radius: 50%;
  background: #50a8eb;
  font-size: 36px;
  font-weight: 500;
  line-height: 64px;
}

/* search results bar */
.results {
  flex: none;
  display: flex;
  align-items: center;
  height: 137px;
  padding: 0 42px 0 36px;
  background:
    radial-gradient(ellipse 40% 100% at 52% 100%, #3a434e, transparent),
    radial-gradient(ellipse 40% 120% at 28% 100%, #403c47, transparent),
    linear-gradient(90deg, #28333f, #2f3743 30%, #2b3744 60%, #222c39 90%);
}
.results .icon-btn + .icon-btn { margin-left: 86px; }
.count { flex: 1; margin-left: 90px; color: #76bdf8; font-size: 42px; font-weight: 500; }
.gesture { flex: none; display: grid; place-items: center; height: 45px; background: #151d26; }
.gesture span { width: 334px; height: 8px; border-radius: 4px; background: #8b8f93; }
```
